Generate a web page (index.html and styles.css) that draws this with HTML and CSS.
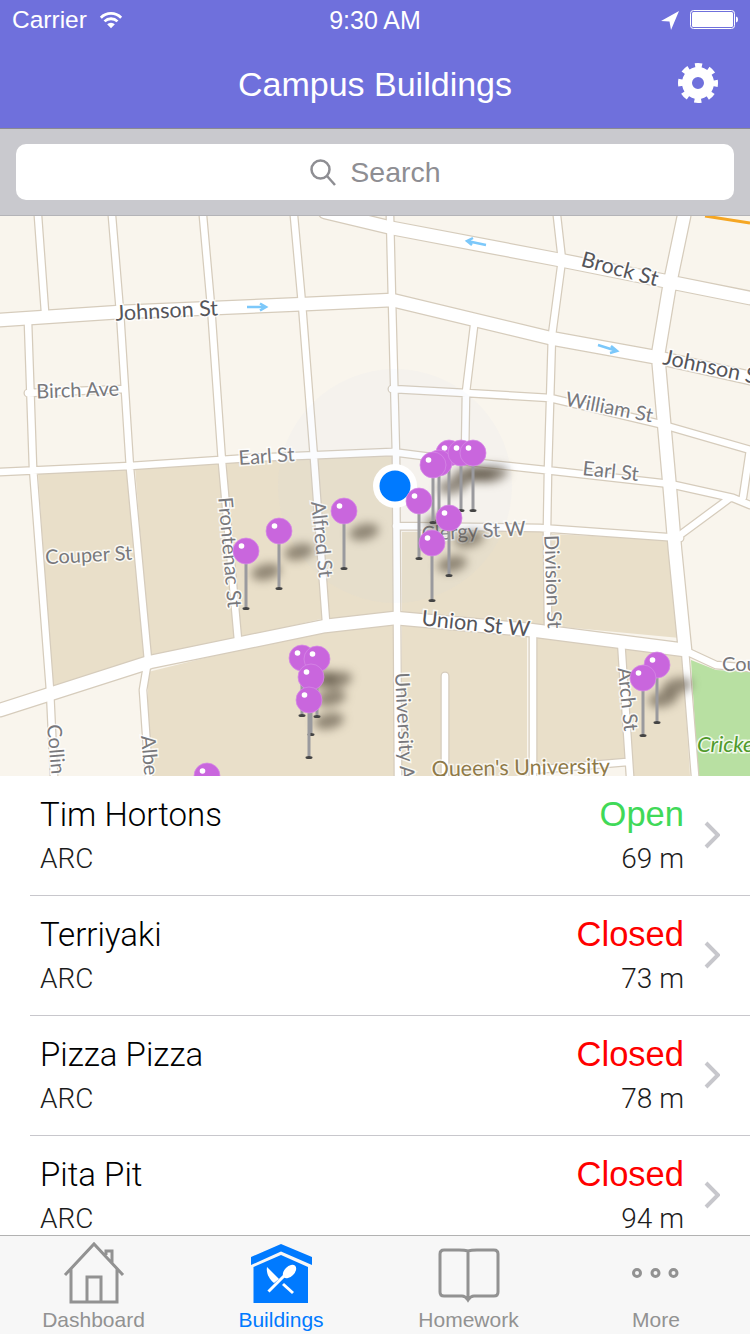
FILE: index.html
```html
<!DOCTYPE html>
<html lang="en">
<head>
  <meta charset="UTF-8" />
  <meta name="viewport" content="width=device-width, initial-scale=1.0" />
  <title>Campus Buildings</title>
  <link rel="stylesheet" href="styles.css">
</head>
<body>
  <div class="screen">
    <header class="topbar">
      <div class="status">
        <div class="status-left">
          <span>Carrier</span>
          <svg class="wifi" width="24" height="20" viewBox="0 0 26 20">
            <path class="wifi-arc" d="M2 7.5a15.5 15.5 0 0 1 22 0M6 11.5a10 10 0 0 1 14 0"/>
            <path class="wifi-dot" d="M13 19l-4.200-4.400a6 6 0 0 1 8.400 0z"/>
          </svg>
        </div>
        <span class="clock">9:30 AM</span>
        <div class="status-right">
          <svg width="20" height="20" viewBox="0 0 20 20"><path class="white-fill" d="M19 1L1 11l8.500 .5L11 20z"/></svg>
          <svg width="48" height="20" viewBox="0 0 48 20">
            <rect class="batt-line" x=".5" y=".5" width="44" height="18" rx="3"/>
            <rect class="white-fill" x="2" y="2" width="41" height="15" rx="1.500"/>
            <path class="white-fill" d="M46 6.500c1.500 .3 2 1.500 2 3s-.5 2.700-2 3z"/>
          </svg>
        </div>
      </div>
      <div class="navbar">
        <h1>Campus Buildings</h1>
        <svg class="gear" width="42" height="42" viewBox="-21 -21 42 42">
          <circle class="gear-ring" r="11"/>
          <circle class="gear-teeth" r="17.500"/>
        </svg>
      </div>
    </header>

    <div class="searchbar">
      <div class="searchbox">
        <svg width="28" height="28" viewBox="0 0 28 28">
          <circle class="search-line" cx="11.500" cy="11.500" r="9"/>
          <path class="search-line" d="M18 18l8 9"/>
        </svg>
        <span>Search</span>
      </div>
    </div>

    <svg class="map" width="750" height="560" viewBox="0 216 750 560">
      <defs>
        <path id="roads-main" d="M0 320L120 312L215 308L306 304L392 300L550 338L660 358L750 378
          M325 212L392 228L560 260L665 281L750 298
          M0 710L150 662L325 626L395 618L530 630L685 650
          M684 216L670 283L658 355L670 490L675 550L685 650"/>
        <path id="roads-side" d="M38 216L45 312M28 322L33 468L50 690L54 776M112 216L120 312L130 468L148 660L143 690L149 776
          M203 216L211 306L222 462L238 640M294 216L302 304L314 458L326 622M390 216L392 300L396 455L398 776
          M474 326L466 392L465 455M557 216L562 260L552 335L548 470L547 530L548 625M533 634L533 776
          M685 650L695 776M621 640L630 776
          M28 393L124 389M392 389L466 393L550 398L660 424L750 450
          M0 472L130 466L250 458L392 452L470 462L545 470L670 484L733 498L750 505M396 526L540 528L680 538
          M688 652L716 665L750 668M680 535L730 498M743 497L750 450M627 762L533 770"/>
        <path id="road-stub" d="M445 776V676"/>
        <g id="pin-shadow"><ellipse cx="20" cy="21" rx="15" ry="8" transform="rotate(-12 20 21)"/></g>
        <g id="pin">
          <rect class="pin-needle" x="-1.500" y="10" width="3" height="47"/>
          <ellipse class="pin-base" cx="0" cy="57.500" rx="3.500" ry="1.500"/>
          <circle class="pin-head" r="13"/>
          <circle class="pin-glint" cx="-4.500" cy="-5" r="2.800"/>
        </g>
      </defs>

      <rect class="land" x="0" y="216" width="750" height="560"/>
      <polygon class="park" points="691,660 716,670 750,672 750,776 698,776"/>
      <g class="campus">
        <polygon points="38,472 130,468 146,660 52,686"/>
        <polygon points="135,467 222,463 236,640 150,660"/>
        <polygon points="226,462 312,459 325,618 240,638"/>
        <polygon points="316,459 394,453 396,612 330,622"/>
        <polygon points="402,532 544,530 544,625 402,612"/>
        <polygon points="552,534 674,540 680,638 552,626"/>
        <polygon points="148,672 325,628 395,622 395,776 148,776"/>
        <polygon points="402,622 527,634 527,776 402,776"/>
        <polygon points="533,636 618,643 626,760 533,766"/>
        <polygon points="625,645 682,650 690,776 632,776"/>
      </g>
      <path class="orange-road" d="M705 216L750 223"/>
      <use href="#roads-side" class="edge-side"/>
      <use href="#roads-main" class="edge-main"/>
      <use href="#road-stub" class="edge-side"/>
      <use href="#roads-side" class="road-side"/>
      <use href="#roads-main" class="road-main"/>
      <use href="#road-stub" class="road-side"/>

      <g class="oneway">
        <path d="M247 307H266M260 303.500L266 307L260 310.500"/>
        <path d="M486 245L467 241M473 238L467 241L472 245"/>
        <path d="M598 345L617 351M611 346L617 351L610 353"/>
      </g>

      <g class="label">
        <text class="major" transform="translate(167 318) rotate(-3)">Johnson St</text>
        <text class="major" transform="translate(618 276) rotate(15)">Brock St</text>
        <text class="major" transform="translate(662 364) rotate(12)" text-anchor="start">Johnson S</text>
        <text class="major" transform="translate(475 631) rotate(6)">Union St W</text>
        <text transform="translate(78 397) rotate(-2)">Birch Ave</text>
        <text transform="translate(608 414) rotate(11)">William St</text>
        <text transform="translate(267 463) rotate(-4)">Earl St</text>
        <text transform="translate(610 478) rotate(6)">Earl St</text>
        <text transform="translate(474 538) rotate(-3)">Clergy St W</text>
        <text transform="translate(89 562) rotate(-3)">Couper St</text>
        <text transform="translate(223 553) rotate(85)">Frontenac St</text>
        <text transform="translate(315 540) rotate(84)">Alfred St</text>
        <text transform="translate(546 582) rotate(88)">Division St</text>
        <text transform="translate(395 673) rotate(87)" text-anchor="start">University A</text>
        <text transform="translate(621 700) rotate(84)">Arch St</text>
        <text transform="translate(47 725) rotate(85)" text-anchor="start">Collin</text>
        <text transform="translate(141 736) rotate(85)" text-anchor="start">Albe</text>
        <text transform="translate(722 671)" text-anchor="start">Cou</text>
      </g>
      <text class="label-campus" transform="translate(521 775) rotate(-1)">Queen's University</text>
      <text class="label-park" x="697" y="752">Cricke</text>

      <circle class="accuracy" cx="395" cy="486" r="117"/>

      <g class="pin-shadows">
        <use href="#pin-shadow" x="246" y="551"/>
        <use href="#pin-shadow" x="279" y="531"/>
        <use href="#pin-shadow" x="344" y="511"/>
        <use href="#pin-shadow" x="448" y="453"/>
        <use href="#pin-shadow" x="461" y="453"/>
        <use href="#pin-shadow" x="473" y="453"/>
        <use href="#pin-shadow" x="433" y="465"/>
        <use href="#pin-shadow" x="419" y="501"/>
        <use href="#pin-shadow" x="449" y="518"/>
        <use href="#pin-shadow" x="432" y="543"/>
        <use href="#pin-shadow" x="302" y="658"/>
        <use href="#pin-shadow" x="317" y="659"/>
        <use href="#pin-shadow" x="311" y="677"/>
        <use href="#pin-shadow" x="309" y="700"/>
        <use href="#pin-shadow" x="643" y="678"/>
        <use href="#pin-shadow" x="657" y="665"/>
      </g>

      <circle class="me-ring" cx="395" cy="486" r="22"/>
      <circle class="me-dot" cx="395" cy="486" r="15.500"/>

      <use href="#pin" x="246" y="551"/>
      <use href="#pin" x="279" y="531"/>
      <use href="#pin" x="344" y="511"/>
      <use href="#pin" x="449" y="453"/>
      <use href="#pin" x="439" y="463"/>
      <use href="#pin" x="461" y="453"/>
      <use href="#pin" x="473" y="453"/>
      <use href="#pin" x="433" y="465"/>
      <use href="#pin" x="419" y="501"/>
      <use href="#pin" x="449" y="518"/>
      <use href="#pin" x="432" y="543"/>
      <use href="#pin" x="302" y="658"/>
      <use href="#pin" x="317" y="659"/>
      <use href="#pin" x="311" y="677"/>
      <use href="#pin" x="309" y="700"/>
      <use href="#pin" x="657" y="665"/>
      <use href="#pin" x="643" y="678"/>
      <use href="#pin" x="207" y="776"/>
    </svg>

    <ul class="list">
      <li class="row">
        <div class="row-left"><span class="name">Tim Hortons</span><span class="sub">ARC</span></div>
        <div class="row-right"><span class="state open">Open</span><span class="sub">69 m</span></div>
        <svg class="chevron" width="16" height="28" viewBox="0 0 16 28"><path d="M2 2l12 12L2 26"/></svg>
      </li>
      <li class="row">
        <div class="row-left"><span class="name">Terriyaki</span><span class="sub">ARC</span></div>
        <div class="row-right"><span class="state closed">Closed</span><span class="sub">73 m</span></div>
        <svg class="chevron" width="16" height="28" viewBox="0 0 16 28"><path d="M2 2l12 12L2 26"/></svg>
      </li>
      <li class="row">
        <div class="row-left"><span class="name">Pizza Pizza</span><span class="sub">ARC</span></div>
        <div class="row-right"><span class="state closed">Closed</span><span class="sub">78 m</span></div>
        <svg class="chevron" width="16" height="28" viewBox="0 0 16 28"><path d="M2 2l12 12L2 26"/></svg>
      </li>
      <li class="row">
        <div class="row-left"><span class="name">Pita Pit</span><span class="sub">ARC</span></div>
        <div class="row-right"><span class="state closed">Closed</span><span class="sub">94 m</span></div>
        <svg class="chevron" width="16" height="28" viewBox="0 0 16 28"><path d="M2 2l12 12L2 26"/></svg>
      </li>
    </ul>

    <nav class="tabbar">
      <a class="tab">
        <svg width="64" height="64" viewBox="0 0 64 64">
          <path class="tab-line" d="M3 34L32 3L61 34M9 27V61H55V27M25 61V36H39V61M44 14V10H50V22"/>
        </svg>
        <span>Dashboard</span>
      </a>
      <a class="tab active">
        <svg width="64" height="64" viewBox="0 0 64 64">
          <path class="tab-blue" d="M32 3L63 16V24L32 10.500L2 24V16z"/>
          <path class="tab-blue" d="M32 14L59 26V62H4.500V26z"/>
          <path class="tab-cut" d="M19.500 50.500L36 34"/>
          <ellipse class="tab-cut-fill" cx="40.500" cy="30.500" rx="5" ry="8" transform="rotate(45 40.500 30.500)"/>
          <path class="tab-cut" d="M34 43L44 52"/>
          <path class="tab-cut-fill" d="M18 26L30 38L25 42C20 38 17 32 18 26z"/>
        </svg>
        <span>Buildings</span>
      </a>
      <a class="tab">
        <svg width="64" height="64" viewBox="0 0 64 64">
          <path class="tab-line" d="M31 10C28 9 25 9 22 9H7Q3 9 3 13V51Q3 55 7 55H25C28 55 29 56 31 59C33 56 34 55 37 55H57Q61 55 61 51V13Q61 9 57 9H40C37 9 34 9 31 10V59"/>
        </svg>
        <span>Homework</span>
      </a>
      <a class="tab">
        <svg width="64" height="64" viewBox="0 0 64 64">
          <circle class="tab-line" cx="13" cy="32" r="3.500"/>
          <circle class="tab-line" cx="31.500" cy="32" r="3.500"/>
          <circle class="tab-line" cx="49.500" cy="32" r="3.500"/>
        </svg>
        <span>More</span>
      </a>
    </nav>
  </div>
</body>
</html>
```

FILE: styles.css
```css
* {
  box-sizing: border-box;
}

body {
  margin: 0;
  font-family: "Liberation Sans", Arial, sans-serif;
  background: #fff;
}

.screen {
  width: 750px;
  height: 1334px;
  display: flex;
  flex-direction: column;
  overflow: hidden;
}

/* top bar */
.topbar {
  height: 129px;
  flex: none;
  background: #6f70dc;
  border-bottom: 1px solid #8a8a92;
  color: #fff;
}

.status {
  height: 40px;
  padding: 0 12px 0 12px;
  display: grid;
  grid-template-columns: 1fr auto 1fr;
  align-items: center;
  font-size: 24.500px;
}

.status-left {
  display: flex;
  align-items: center;
  gap: 12px;
}

.status-right {
  display: flex;
  align-items: center;
  justify-content: flex-end;
  gap: 10px;
}

.clock {
  font-size: 25px;
}

.wifi-arc {
  fill: none;
  stroke: #fff;
  stroke-width: 3;
}

.wifi-dot,
.white-fill {
  fill: #fff;
}

.batt-line {
  fill: none;
  stroke: #fff;
  stroke-width: 1;
}

.navbar {
  height: 88px;
  position: relative;
  display: flex;
  align-items: center;
  justify-content: center;
}

.navbar h1 {
  margin: 0;
  font-size: 34px;
  font-weight: normal;
}

.gear {
  position: absolute;
  right: 31px;
  top: 22px;
}

.gear-ring {
  fill: none;
  stroke: #fff;
  stroke-width: 10;
}

.gear-teeth {
  fill: none;
  stroke: #fff;
  stroke-width: 5;
  stroke-dasharray: 7 6.740;
  stroke-dashoffset: 3.500;
}

/* search */
.searchbar {
  height: 87px;
  flex: none;
  padding: 15px 16px 16px;
  background: #c9c9ce;
  border-bottom: 1px solid #b4b4b8;
}

.searchbox {
  height: 56px;
  background: #fff;
  border-radius: 10px;
  display: flex;
  align-items: center;
  justify-content: center;
  gap: 13px;
  color: #8e8e93;
  font-size: 28.500px;
}

.search-line {
  fill: none;
  stroke: #8e8e93;
  stroke-width: 2.500;
}

/* map */
.map {
  display: block;
  flex: none;
}

.land {
  fill: #f9f5ed;
}

.park {
  fill: #b8e0a2;
}

.campus {
  fill: #e9dfc9;
}

.orange-road {
  fill: none;
  stroke: #f5a623;
  stroke-width: 3;
}

.edge-main,
.edge-side,
.road-main,
.road-side {
  fill: none;
  stroke-linejoin: round;
  stroke-linecap: round;
}

.edge-main {
  stroke: #d6ccbc;
  stroke-width: 15;
}

.road-main {
  stroke: #fff;
  stroke-width: 12.500;
}

.edge-side {
  stroke: #d6ccbc;
  stroke-width: 9;
}

.road-side {
  stroke: #fff;
  stroke-width: 6.500;
}

.oneway path {
  fill: none;
  stroke: #7cc8fa;
  stroke-width: 2.500;
}

.label text {
  font-family: Lato, sans-serif;
  font-size: 20px;
  fill: #78787c;
  text-anchor: middle;
  paint-order: stroke;
  stroke: rgba(255, 255, 255, .8);
  stroke-width: 3px;
}

.label text[text-anchor="start"] {
  text-anchor: start;
}

.label .major {
  font-size: 21.500px;
  fill: #55555a;
}

.label-campus {
  font-family: Lato, sans-serif;
  font-size: 21.500px;
  fill: #8f7a48;
  text-anchor: middle;
  paint-order: stroke;
  stroke: rgba(255, 255, 255, .7);
  stroke-width: 3px;
}

.label-park {
  font-family: Lato, sans-serif;
  font-size: 22px;
  font-style: italic;
  fill: #4f9a2c;
  paint-order: stroke;
  stroke: rgba(255, 255, 255, .8);
  stroke-width: 3px;
}

.accuracy {
  fill: rgba(200, 215, 235, .07);
}

.pin-shadows {
  fill: rgba(85, 75, 60, .6);
  filter: blur(5px);
}

.me-ring {
  fill: #fff;
}

.me-dot {
  fill: #007aff;
}

.pin-needle {
  fill: #9a9a9e;
}

.pin-base {
  fill: #444;
}

.pin-head {
  fill: #c966dd;
  stroke: #d68ae6;
  stroke-width: .75;
}

.pin-glint {
  fill: #fff;
}

/* list */
.list {
  flex: 1;
  min-height: 0;
  margin: 0;
  padding: 0;
  list-style: none;
  overflow: hidden;
  background: #fff;
}

.row {
  height: 120px;
  margin-left: 30px;
  padding: 0 31px 1px 10px;
  display: flex;
  align-items: center;
  border-bottom: 1px solid #c8c7cc;
  font-family: Roboto, sans-serif;
  font-weight: 300;
}

.row-left,
.row-right {
  display: flex;
  flex-direction: column;
}

.row-left {
  flex: 1;
  gap: 7px;
}

.row-right {
  gap: 8px;
  align-items: flex-end;
  margin-right: 20px;
}

.name {
  font-size: 33px;
  line-height: 41px;
  color: #000;
}

.sub {
  font-size: 28px;
  line-height: 34px;
  color: #1c1c1c;
}

.state {
  font-family: "Liberation Sans", Arial, sans-serif;
  font-size: 34.500px;
  line-height: 39px;
  font-weight: 400;
}

.open {
  color: #40d958;
}

.closed {
  color: #ff0000;
}

.chevron {
  flex: none;
  margin-right: -1px;
}

.chevron path {
  fill: none;
  stroke: #c7c7cc;
  stroke-width: 4;
}

/* tab bar */
.tabbar {
  height: 99px;
  flex: none;
  display: grid;
  grid-template-columns: 187px 188px 187px 188px;
  background: #f7f7f7;
  border-top: 1px solid #b2b2b2;
}

.tab {
  display: flex;
  flex-direction: column;
  align-items: center;
  padding-top: 5px;
  gap: 2px;
  color: #929292;
  font-size: 21px;
  line-height: 26px;
}

.tab svg {
  display: block;
}

.tab.active {
  color: #007aff;
}

.tab-line {
  fill: none;
  stroke: #929292;
  stroke-width: 3;
}

.tab-blue {
  fill: #007aff;
}

.tab-cut {
  fill: none;
  stroke: #fff;
  stroke-width: 3;
}

.tab-cut-fill {
  fill: #fff;
}
```
